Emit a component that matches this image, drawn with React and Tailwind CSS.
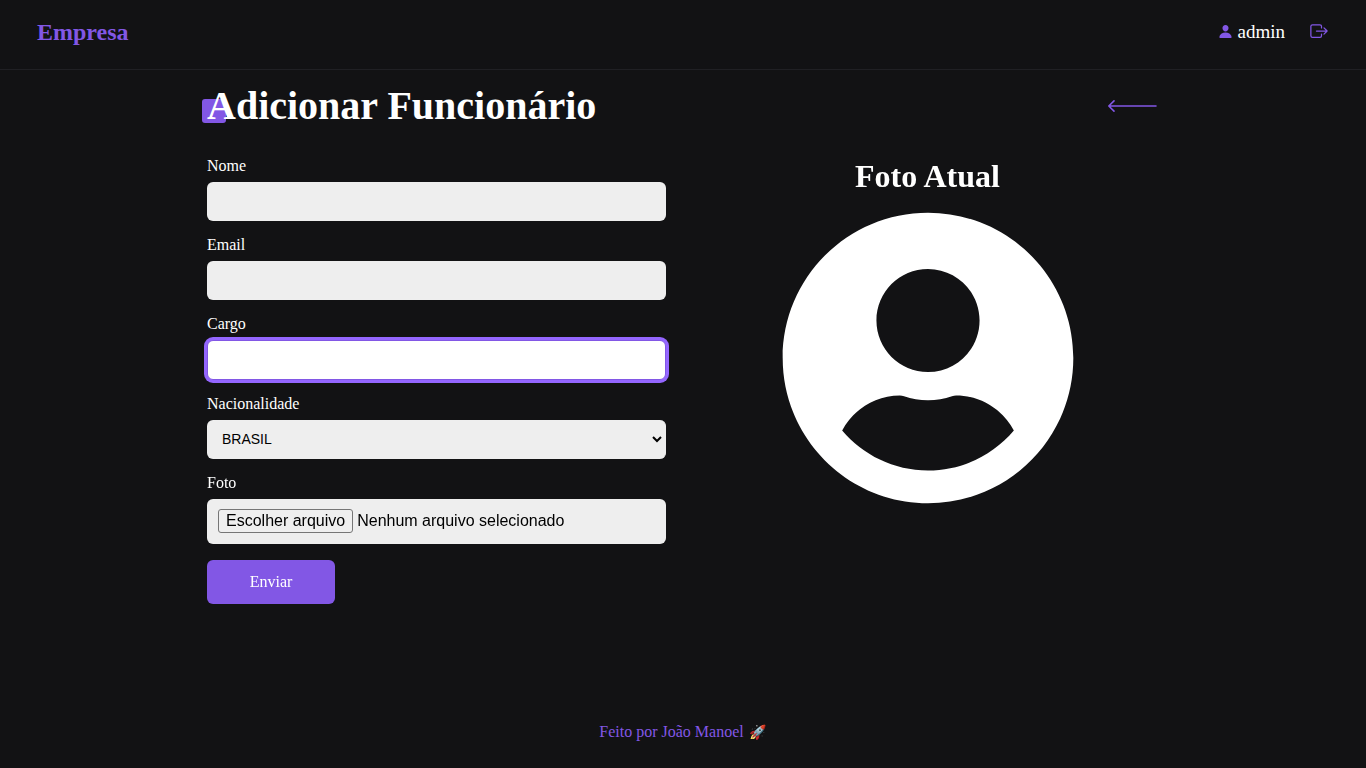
import { useState } from "react";
import { IoExitOutline, IoPerson } from "react-icons/io5";
import { FaUserCircle } from "react-icons/fa";

const NO_FILE = "Nenhum arquivo selecionado";

function Field({ id, label, children }) {
  return (
    <div className="flex flex-col">
      <label htmlFor={id} className="mb-[7px] text-base leading-[18px]">
        {label}
      </label>
      {children}
    </div>
  );
}

function TextInput({ id, type = "text", autoFocus = false }) {
  return (
    <input
      id={id}
      name={id}
      type={type}
      autoFocus={autoFocus}
      className="block h-[39px] w-full rounded-md bg-[#eee] px-[10px] font-['Liberation_Sans',sans-serif] text-sm text-black outline-none focus:h-10 focus:border focus:border-[#8257e5] focus:bg-white focus:ring-3 focus:ring-[#9466ff]"
    />
  );
}

function BackArrow() {
  return (
    <svg
      width="50"
      height="12"
      viewBox="0 0 50 12"
      fill="none"
      stroke="currentColor"
      strokeWidth="1.6"
      strokeLinecap="round"
      strokeLinejoin="round"
      aria-hidden="true"
    >
      <path d="M7 .9 1.8 6 7 11.1M1.8 6h47.2" />
    </svg>
  );
}

export default function App() {
  const [fileName, setFileName] = useState(NO_FILE);

  return (
    <div className="flex min-h-screen flex-col bg-[#121214] font-['Liberation_Serif',serif] text-white">
      <header className="flex h-[70px] items-center justify-between border-b border-[#202024] px-[37px] pb-[6px]">
        <a href="#inicio" className="text-2xl font-bold text-[#8257e5]">
          Empresa
        </a>
        <div className="flex items-center gap-6">
          <span className="flex items-center gap-[5px] text-[19px] leading-6">
            <IoPerson size={15} className="text-[#8257e5]" />
            admin
          </span>
          <button type="button" aria-label="Sair" className="pb-0.5 text-[#8257e5]">
            <IoExitOutline size={20} />
          </button>
        </div>
      </header>

      <main className="mx-auto w-full max-w-[952px] flex-1 pr-0.5">
        <div className="flex items-center justify-between pt-3">
          <h1 className="relative isolate text-[40px] leading-12 font-bold before:absolute before:top-[17px] before:-left-[5px] before:-z-10 before:size-6 before:rounded-[3px] before:bg-[#8257e5]">
            Adicionar Funcionário
          </h1>
          <a href="#voltar" aria-label="Voltar" className="text-[#8257e5]">
            <BackArrow />
          </a>
        </div>

        <div className="grid grid-cols-2 gap-8 pt-[27px]">
          <form onSubmit={(e) => e.preventDefault()}>
            <div className="flex flex-col gap-[15px]">
              <Field id="nome" label="Nome">
                <TextInput id="nome" />
              </Field>
              <Field id="email" label="Email">
                <TextInput id="email" type="email" />
              </Field>
              <Field id="cargo" label="Cargo">
                <TextInput id="cargo" autoFocus />
              </Field>
              <Field id="nacionalidade" label="Nacionalidade">
                <select
                  id="nacionalidade"
                  name="nacionalidade"
                  defaultValue="BRASIL"
                  className="block h-[39px] w-full rounded-md border-r border-[#eee] bg-[#eee] pb-px pl-[11px] font-['Liberation_Sans',sans-serif] text-sm text-black outline-none"
                >
                  <option>BRASIL</option>
                </select>
              </Field>
              <Field id="foto" label="Foto">
                <label
                  htmlFor="foto"
                  className="flex h-[45px] items-center gap-1 rounded-md bg-[#eee] px-[11px] pb-0.5 font-['Liberation_Sans',sans-serif] text-base text-black"
                >
                  <input
                    id="foto"
                    name="foto"
                    type="file"
                    className="sr-only"
                    onChange={(e) => setFileName(e.target.files[0]?.name ?? NO_FILE)}
                  />
                  <span className="rounded-[3px] border border-[#767676] bg-[#efefef] px-[7px] leading-[22px]">
                    Escolher arquivo
                  </span>
                  <span className="leading-[22px]">{fileName}</span>
                </label>
              </Field>
            </div>
            <button
              type="submit"
              className="mt-4 h-11 w-32 rounded-md bg-[#8257e5] text-base text-white"
            >
              Enviar
            </button>
          </form>

          <section className="flex flex-col items-center">
            <h2 className="text-[32px] leading-[38px] font-bold">Foto Atual</h2>
            <FaUserCircle size={300} className="mt-[13px]" />
          </section>
        </div>
      </main>

      <footer className="pb-6 text-center text-base text-[#8257e5]">
        Feito por João Manoel <span className="px-px text-sm">🚀</span>
      </footer>
    </div>
  );
}
